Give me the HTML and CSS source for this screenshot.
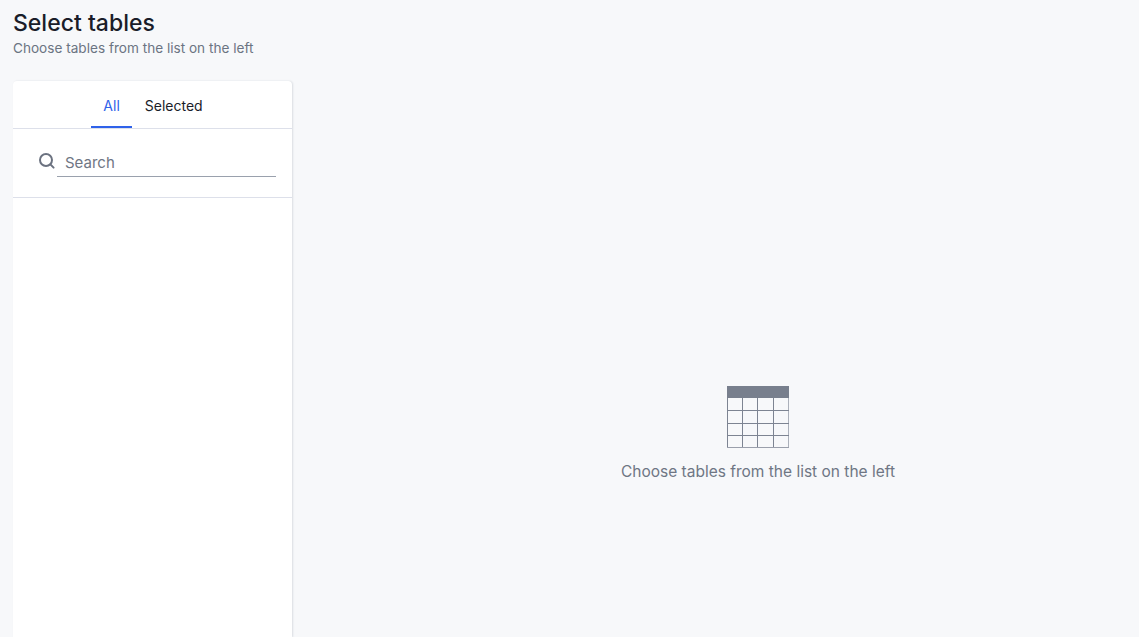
FILE: index.html
```html
<!DOCTYPE html>
<html lang="en">
  <head>
    <meta charset="utf-8" />
    <title>Select tables</title>
    <link rel="stylesheet" href="styles.css">
  </head>
  <body>
    <header class="page-head">
      <h1 class="page-title">Select tables</h1>
      <p class="page-sub">Choose tables from the list on the left</p>
    </header>
    <main class="content">
      <section class="panel">
        <nav class="tabs">
          <a class="tab active">All</a>
          <a class="tab">Selected</a>
        </nav>
        <div class="search">
          <svg class="search-icon" width="18" height="18" viewBox="0 0 18 18" fill="none" stroke="#6b7280" stroke-width="2">
            <circle cx="8" cy="8" r="6" />
            <path d="M12.4 12.4 L15.6 15.6" stroke-linecap="round" />
          </svg>
          <div class="search-field">Search</div>
        </div>
      </section>
      <section class="empty">
        <svg class="empty-icon" width="62" height="62" viewBox="0 0 62 62" fill="none">
          <rect x="0" y="0" width="62" height="12" fill="#787f8d" />
          <path d="M0.5 12V62M15.5 12V62M30.5 12V62M46.5 12V62" stroke="#7d8492" />
          <path d="M61.5 12V62" stroke="#abb0ba" />
          <path d="M0 24.5H62M0 37.5H62M0 49.5H62" stroke="#7d8492" />
          <path d="M0 61.5H62" stroke="#9a9fab" />
        </svg>
        <p class="empty-text">Choose tables from the list on the left</p>
      </section>
    </main>
  </body>
</html>
```

FILE: styles.css
```css
html, body {
  height: 100%;
  margin: 0;
  overflow: hidden;
}
body {
  background-color: #f7f8fa;
  font-family: "Inter", "Liberation Sans", sans-serif;
  display: flex;
  flex-direction: column;
  box-sizing: border-box;
  padding: 10px 0 0 13px;
}
.page-title {
  margin: 0;
  font-size: 23px;
  line-height: 27px;
  font-weight: 500;
  color: #1a1d29;
}
.page-sub {
  margin: 2px 0 0 0;
  font-size: 13.6px;
  line-height: 18px;
  color: #6b7482;
}
.content {
  flex: 1;
  display: flex;
  margin-top: 24px;
  min-height: 0;
}
.panel {
  width: 279px;
  flex: none;
  background-color: #fff;
  border-radius: 4px 4px 0 0;
  box-shadow: 1px 0 2px 0 rgba(53, 64, 82, .14);
}
.tabs {
  display: flex;
  justify-content: center;
  height: 47px;
  border-bottom: 1px solid #dde0ea;
  box-sizing: content-box;
  padding-left: 1px;
}
.tab {
  padding: 0 12.5px;
  font-size: 14px;
  line-height: 50px;
  color: #1a1d29;
  height: 47px;
  box-sizing: border-box;
}
.tab.active {
  color: #2f62ea;
  border-bottom: 2px solid #2f62ea;
}
.search {
  display: flex;
  align-items: flex-start;
  height: 45px;
  border-bottom: 1px solid #dde0ea;
  padding: 23px 16px 0 25px;
  box-sizing: content-box;
}
.search-icon {
  flex: none;
  margin-right: 1px;
}
.search-field {
  flex: 1;
  height: 24px;
  padding-left: 8px;
  font-size: 15px;
  line-height: 22px;
  color: #6f7684;
  border-bottom: 1px solid #9aa1ad;
}
.empty {
  flex: 1;
  display: flex;
  flex-direction: column;
  align-items: center;
  padding: 305px 0 0 85px;
}
.empty-icon {
  display: block;
}
.empty-text {
  margin: 14px 0 0 0;
  font-size: 15.5px;
  line-height: 20px;
  color: #6f7684;
}
```
